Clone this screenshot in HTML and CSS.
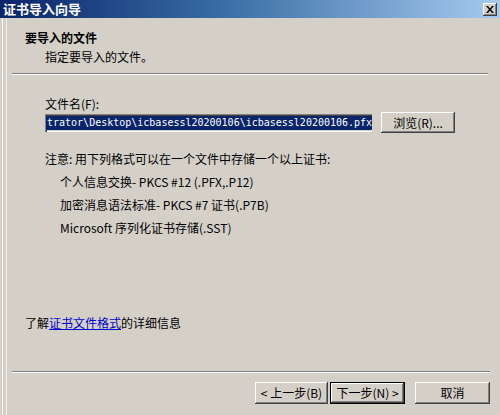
FILE: index.html
```html
<!DOCTYPE html>
<html lang="zh-CN">
<head>
    <meta charset="UTF-8">
    <title>证书导入向导</title>
    <link rel="stylesheet" href="styles.css">
</head>
<body>
    <div class="window">
        <!-- Judul jendela -->
        <div class="titlebar">
            <span class="title">证书导入向导</span>
            <span class="close-btn">
                <svg width="8" height="7" viewBox="0 0 8 7">
                    <path d="M0 0h2l2 2.5L6 0h2L5 3.5 8 7H6L4 4.5 2 7H0l3-3.5z" fill="#000"/>
                </svg>
            </span>
        </div>

        <!-- Header wizard -->
        <div class="header">
            <div class="header-title">要导入的文件</div>
            <div class="header-sub">指定要导入的文件。</div>
        </div>
        <div class="sep sep-top"></div>

        <!-- Isi halaman -->
        <div class="content">
            <div class="label">文件名(F):</div>
            <div class="file-row">
                <div class="file-input"><span class="selected">trator\Desktop\icbasessl20200106\icbasessl20200106.pfx</span></div>
                <button class="btn browse">浏览(R)...</button>
            </div>

            <div class="note">注意: 用下列格式可以在一个文件中存储一个以上证书:</div>
            <ul class="formats">
                <li>个人信息交换- PKCS #12 (.PFX,.P12)</li>
                <li>加密消息语法标准- PKCS #7 证书(.P7B)</li>
                <li>Microsoft 序列化证书存储(.SST)</li>
            </ul>
        </div>

        <div class="more">了解<a href="#">证书文件格式</a>的详细信息</div>

        <div class="sep sep-bottom"></div>

        <!-- Tombol navigasi -->
        <div class="footer">
            <button class="btn">&lt; 上一步(B)</button>
            <button class="btn default">下一步(N) &gt;</button>
            <button class="btn cancel">取消</button>
        </div>
    </div>
</body>
</html>
```

FILE: styles.css
```css
/* Dasar halaman */
body {
    margin: 0;
    background: #d4d0c8;
    font-family: "Noto Sans CJK SC", sans-serif;
    font-size: 12px;
    line-height: 14px;
    color: #000;
}

/* Jendela utama */
.window {
    width: 500px;
    height: 415px;
    overflow: hidden;
    box-shadow: inset 2px 0 0 #d4d0c8, inset 3px 0 0 #ffffff, inset 6px 0 0 #d4d0c8, inset 7px 0 0 #eeece6;
}

/* Title bar */
.titlebar {
    height: 18px;
    display: flex;
    align-items: center;
    justify-content: space-between;
    padding: 0 3px 0 3px;
    background: linear-gradient(to right, #0a246a 0%, #3a6ea5 45%, #a6caf0 100%);
}

.title {
    color: #fff;
    font-weight: bold;
    font-size: 13px;
}

.close-btn {
    width: 14px;
    height: 13px;
    display: flex;
    align-items: center;
    justify-content: center;
    background: #d4d0c8;
    box-shadow: inset -1px -1px 0 #404040, inset 1px 1px 0 #fff, inset -2px -2px 0 #808080;
}

/* Header */
.header {
    height: 42px;
    padding: 13px 0 0 25px;
}

.header-title {
    font-weight: bold;
}

.header-sub {
    margin-top: 5px;
    padding-left: 20px;
}

/* Garis pemisah */
.sep {
    height: 0;
    border-top: 1px solid #808080;
    border-bottom: 1px solid #ffffff;
}

.sep-top {
    margin: 0 12px 0 12px;
}

.sep-bottom {
    margin: 0 10px 0 12px;
}

/* Konten */
.content {
    padding: 22px 0 0 45px;
}

.file-row {
    display: flex;
    align-items: center;
    gap: 9px;
    margin-top: 1px;
}

.file-input {
    width: 325px;
    height: 16px;
    padding: 1px;
    background: #fff;
    box-shadow: inset 1px 1px 0 #808080, inset 2px 2px 0 #404040, inset -1px -1px 0 #ffffff, inset -2px -2px 0 #d4d0c8;
    border: 0;
    display: flex;
    align-items: center;
    overflow: hidden;
}

.selected {
    background: #0a246a;
    color: #fff;
    font-family: "DejaVu Sans Mono", monospace;
    font-size: 10px;
    line-height: 14px;
    padding: 0 1px;
    white-space: nowrap;
}

/* Tombol klasik */
.btn {
    font-family: "Noto Sans CJK SC", sans-serif;
    font-size: 12px;
    line-height: 14px;
    height: 22px;
    background: #d4d0c8;
    border: 0;
    padding: 0;
    color: #000;
    box-shadow: inset -1px -1px 0 #404040, inset 1px 1px 0 #ffffff, inset -2px -2px 0 #808080;
}

.browse {
    width: 74px;
    height: 21px;
}

.note {
    margin-top: 19px;
}

.formats {
    list-style: none;
    margin: 0;
    padding: 0 0 0 15px;
}

.formats li {
    margin-top: 9px;
}

.more {
    padding: 81px 0 0 25px;
    height: 55px;
}

.more a {
    color: #0000cc;
}

/* Footer */
.footer {
    display: flex;
    padding: 9px 0 0 255px;
}

.footer .btn {
    width: 73px;
}

.footer .default {
    margin-left: 2px;
    width: 75px;
    box-shadow: inset 0 0 0 1px #000, inset -2px -2px 0 #404040, inset 2px 2px 0 #ffffff, inset -3px -3px 0 #808080;
}

.footer .cancel {
    margin-left: 10px;
    width: 75px;
}
```
